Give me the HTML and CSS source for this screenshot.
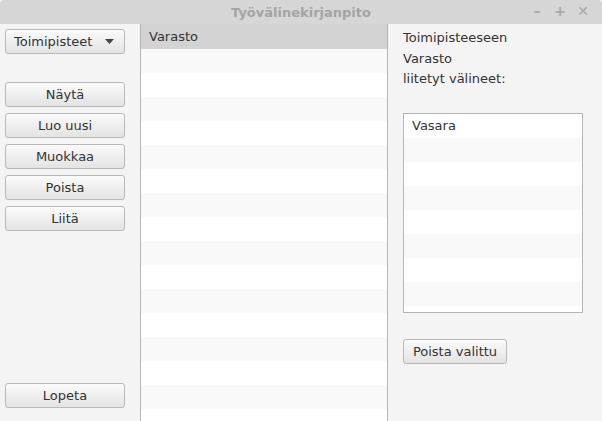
FILE: index.html
```html
<!DOCTYPE html>
<html>
<head>
<meta charset="utf-8">
<link rel="stylesheet" href="styles.css">
</head>
<body>
<div class="window">
  <div class="titlebar">
    <div class="title">Työvälinekirjanpito</div>
    <div class="controls">
      <span class="ctl">–</span>
      <span class="ctl">+</span>
      <span class="ctl">✕</span>
    </div>
  </div>
  <div class="main">
    <div class="left">
      <div class="combo">
        <span>Toimipisteet</span>
        <svg class="arrow" width="9" height="5" viewBox="0 0 9 5"><path d="M0 0H9L4.5 5Z" fill="#444"/></svg>
      </div>
      <div class="btns">
        <div class="btn">Näytä</div>
        <div class="btn">Luo uusi</div>
        <div class="btn">Muokkaa</div>
        <div class="btn">Poista</div>
        <div class="btn">Liitä</div>
      </div>
      <div class="btn bottom">Lopeta</div>
    </div>
    <div class="center">
      <div class="header">Varasto</div>
      <div class="rows">
        <div class="row odd"></div><div class="row"></div>
        <div class="row odd"></div><div class="row"></div>
        <div class="row odd"></div><div class="row"></div>
        <div class="row odd"></div><div class="row"></div>
        <div class="row odd"></div><div class="row"></div>
        <div class="row odd"></div><div class="row"></div>
        <div class="row odd"></div><div class="row"></div>
        <div class="row odd"></div><div class="row"></div>
      </div>
    </div>
    <div class="right">
      <div class="label">Toimipisteeseen</div>
      <div class="label">Varasto</div>
      <div class="label">liitetyt välineet:</div>
      <div class="listbox">
        <div class="lrow">Vasara</div>
        <div class="lrow odd"></div>
        <div class="lrow"></div>
        <div class="lrow odd"></div>
        <div class="lrow"></div>
        <div class="lrow odd"></div>
        <div class="lrow"></div>
        <div class="lrow odd"></div>
        <div class="lrow"></div>
      </div>
      <div class="btn small">Poista valittu</div>
    </div>
  </div>
</div>
</body>
</html>
```

FILE: styles.css
```css
* { box-sizing: border-box; }
html, body { margin: 0; padding: 0; }
body {
  width: 602px;
  height: 421px;
  overflow: hidden;
  font-family: "DejaVu Sans", sans-serif;
  font-size: 13px;
  color: #333;
  background: #f4f4f4;
}
.window { width: 602px; height: 421px; display: flex; flex-direction: column; }
.titlebar {
  height: 24px;
  background: #d6d6d6;
  position: relative;
  display: flex;
  align-items: center;
  justify-content: center;
  border-top-left-radius: 4px;
  border-top-right-radius: 4px;
}
.title {
  font-weight: bold;
  color: #a4a4a4;
  font-size: 13px;
}
.controls {
  position: absolute;
  right: 13px;
  top: 3px;
  display: flex;
  gap: 11px;
}
.ctl {
  color: #a8a8a8;
  font-weight: bold;
  font-size: 14px;
  width: 12px;
  text-align: center;
}
.main { flex: 1; display: flex; min-height: 0; }
.left {
  width: 140px;
  padding: 5px 0 13px 5px;
  display: flex;
  flex-direction: column;
}
.combo {
  width: 120px;
  height: 25px;
  border: 1px solid #b8b8b8;
  border-radius: 3px;
  background: linear-gradient(#fbfbfb, #e3e3e3);
  display: flex;
  align-items: center;
  justify-content: space-between;
  padding: 0 10px 0 8px;
}
.arrow { display: block; }
.btns {
  margin-top: 28px;
  display: flex;
  flex-direction: column;
  gap: 6px;
}
.btn {
  width: 120px;
  height: 25px;
  border: 1px solid #b8b8b8;
  border-radius: 3px;
  background: linear-gradient(#fbfbfb, #e3e3e3);
  display: flex;
  align-items: center;
  justify-content: center;
}
.btn.bottom { margin-top: auto; }
.center {
  width: 248px;
  border-left: 1px solid #b5b5b5;
  border-right: 1px solid #b5b5b5;
  background: #fff;
  display: flex;
  flex-direction: column;
  overflow: hidden;
}
.header {
  height: 25px;
  background: #d3d3d3;
  padding-left: 8px;
  display: flex;
  align-items: center;
  flex: none;
}
.row { height: 24px; background: #fff; }
.row.odd { background: #f9f9f9; }
.right {
  flex: 1;
  padding: 4px 0 0 15px;
  display: flex;
  flex-direction: column;
}
.label { line-height: 20.5px; height: 20.5px; }
.listbox {
  margin-top: 23px;
  width: 180px;
  height: 200px;
  border: 1px solid #b5b5b5;
  background: #fff;
  overflow: hidden;
}
.lrow {
  height: 24px;
  background: #fff;
  padding-left: 8px;
  display: flex;
  align-items: center;
}
.lrow.odd { background: #f9f9f9; }
.btn.small { width: 104px; margin-top: 26px; }
```
